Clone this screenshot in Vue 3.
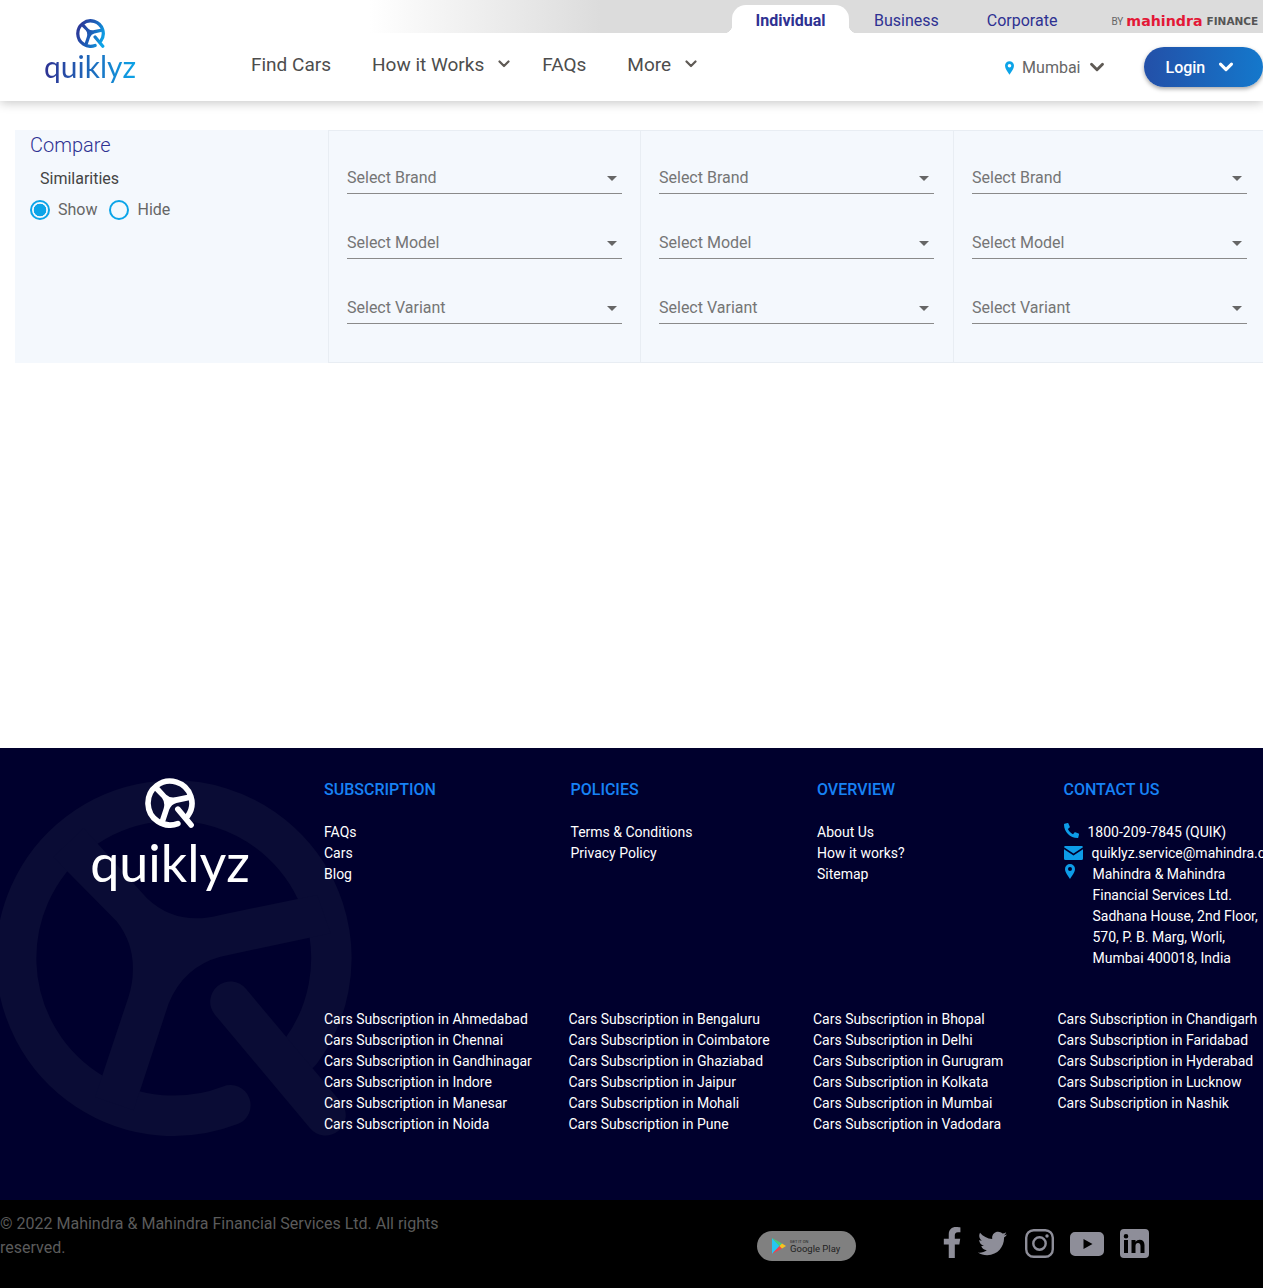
<script setup>
const similar = ["Show", "Hide"];
const selectCols = [1, 2, 3];
const selects = ["Select Brand", "Select Model", "Select Variant"];

const footerCols = [
  { title: "SUBSCRIPTION", links: ["FAQs", "Cars", "Blog"] },
  { title: "POLICIES", links: ["Terms & Conditions", "Privacy Policy"] },
  { title: "OVERVIEW", links: ["About Us", "How it works?", "Sitemap"] },
];

const cities = [
  ["Ahmedabad", "Chennai", "Gandhinagar", "Indore", "Manesar", "Noida"],
  ["Bengaluru", "Coimbatore", "Ghaziabad", "Jaipur", "Mohali", "Pune"],
  ["Bhopal", "Delhi", "Gurugram", "Kolkata", "Mumbai", "Vadodara"],
  ["Chandigarh", "Faridabad", "Hyderabad", "Lucknow", "Nashik"],
];
</script>

<template>
  <div class="page">
    <!-- shared wheel shape for both logos and the footer watermark -->
    <svg class="defs" width="0" height="0">
      <defs>
        <linearGradient id="wheelGrad" gradientUnits="userSpaceOnUse" x1="0" y1="300" x2="1060" y2="700">
          <stop offset="0" stop-color="#2e3192" />
          <stop offset="0.55" stop-color="#1c5fb8" />
          <stop offset="1" stop-color="#0ca4e8" />
        </linearGradient>
        <symbol id="wheel" viewBox="-15 85 1180 1075">
          <path fill="none" stroke-width="121" stroke-linecap="round" d="M690 1065A472 472 0 1 1 900 905" />
          <path stroke="none" d="M160 322L350 515Q400 580 398 660Q398 700 385 740L285 1040L400 1080L505 760Q550 650 660 620L990 550L950 435L660 495Q530 530 440 445L250 235Z" />
          <path fill="none" stroke-width="121" stroke-linecap="round" d="M690 755L975 1095" />
        </symbol>
      </defs>
    </svg>

    <header class="header">
      <div class="strip">
        <div class="tabs">
          <a class="tab active">Individual</a>
          <a class="tab business">Business</a>
          <a class="tab corporate">Corporate</a>
        </div>
        <div class="by-line">
          <span class="by">BY</span>
          <span class="mahindra">mahindra</span>
          <span class="finance">FINANCE</span>
        </div>
      </div>

      <div class="bar">
        <div class="logo">
          <svg class="logo-icon" fill="url(#wheelGrad)" stroke="url(#wheelGrad)"><use href="#wheel" /></svg>
          <span class="logo-word">quiklyz</span>
        </div>

        <nav class="nav">
          <a class="find">Find Cars</a>
          <a class="how">How it Works</a>
          <svg class="chev how-chev" viewBox="0 0 12 8"><path d="M1.5 1.5L6 6l4.5-4.5" /></svg>
          <a class="faq">FAQs</a>
          <a class="more">More</a>
          <svg class="chev more-chev" viewBox="0 0 12 8"><path d="M1.5 1.5L6 6l4.5-4.5" /></svg>
        </nav>

        <div class="city">
          <svg class="pin" viewBox="0 0 10 15"><path fill-rule="evenodd" d="M5 0a5 5 0 0 1 5 5c0 3-3 7-5 10C3 12 0 8 0 5a5 5 0 0 1 5-5zm0 3a2 2 0 1 0 0 4 2 2 0 0 0 0-4z" /></svg>
          <span>Mumbai</span>
          <svg class="chev city-chev" viewBox="0 0 14 10"><path d="M2 2l5 5 5-5" /></svg>
        </div>

        <button class="login">
          <span>Login</span>
          <svg class="login-chev" viewBox="0 0 14 10"><path d="M2 2l5 5 5-5" /></svg>
        </button>
      </div>
    </header>

    <main class="compare">
      <section class="col-first">
        <h2>Compare</h2>
        <div class="similar">Similarities</div>
        <div class="radios">
          <label v-for="(opt, i) in similar" :key="opt" class="radio">
            <span class="ring" :class="{ on: i === 0 }"></span>
            {{ opt }}
          </label>
        </div>
      </section>
      <section v-for="c in selectCols" :key="c" class="col-select">
        <div v-for="s in selects" :key="s" class="select">
          <span>{{ s }}</span>
          <i class="caret"></i>
        </div>
      </section>
    </main>

    <footer class="footer">
      <svg class="watermark"><use href="#wheel" /></svg>
      <div class="foot-main">
        <div class="foot-logo">
          <svg class="foot-icon" fill="#fff" stroke="#fff"><use href="#wheel" /></svg>
          <span class="foot-word">quiklyz</span>
        </div>
        <div class="foot-cols">
          <div class="foot-row">
            <div v-for="col in footerCols" :key="col.title">
              <h4>{{ col.title }}</h4>
              <a v-for="l in col.links" :key="l" class="foot-link">{{ l }}</a>
            </div>
            <div class="contact">
              <h4>CONTACT US</h4>
              <div class="contact-line">
                <svg class="c-phone" viewBox="0 0 512 512"><path transform="matrix(-1 0 0 1 512 0)" d="M493.4 24.6l-104-24c-11.3-2.6-22.9 3.3-27.5 13.9l-48 112c-4.2 9.8-1.4 21.3 6.9 28l60.6 49.6c-36 76.7-98.9 140.5-177.2 177.2l-49.6-60.6c-6.8-8.3-18.2-11.1-28-6.9l-112 48C3.9 366.5-2 378.1.6 389.4l24 104C27.1 504.2 36.7 512 48 512c256.1 0 464-207.5 464-464 0-11.2-7.7-20.9-18.6-23.4z" /></svg>
                <span>1800-209-7845 (QUIK)</span>
              </div>
              <div class="contact-line">
                <svg class="c-mail" viewBox="0 0 19 14"><path d="M1.5 0h16A1.5 1.5 0 0 1 19 1.2L9.5 7.4 0 1.2A1.5 1.5 0 0 1 1.5 0zM0 3.2l9.5 6.2L19 3.2v9.3a1.5 1.5 0 0 1-1.5 1.5h-16A1.5 1.5 0 0 1 0 12.5z" /></svg>
                <span class="nowrap">quiklyz.service@mahindra.com</span>
              </div>
              <div class="contact-line">
                <svg class="c-pin" viewBox="0 0 10 15"><path fill-rule="evenodd" d="M5 0a5 5 0 0 1 5 5c0 3-3 7-5 10C3 12 0 8 0 5a5 5 0 0 1 5-5zm0 3a2 2 0 1 0 0 4 2 2 0 0 0 0-4z" /></svg>
                <span class="address">Mahindra &amp; Mahindra<br />Financial Services Ltd.<br />Sadhana House, 2nd Floor,<br />570, P. B. Marg, Worli,<br />Mumbai 400018, India</span>
              </div>
            </div>
          </div>
          <div class="city-row">
            <div v-for="(col, i) in cities" :key="i">
              <a v-for="name in col" :key="name" class="foot-link">Cars Subscription in {{ name }}</a>
            </div>
          </div>
        </div>
      </div>
    </footer>

    <div class="bottom">
      <p class="copy">© 2022 Mahindra &amp; Mahindra Financial Services Ltd. All rights reserved.</p>
      <div class="play">
        <svg class="play-icon" viewBox="0 0 14 16">
          <path fill="#25c6f0" d="M0 0l7.500 8L0 16z" />
          <path fill="#3fd07c" d="M0 0l10 5.500L7.500 8z" />
          <path fill="#f0414f" d="M0 16l10-5.500L7.500 8z" />
          <path fill="#f9c21e" d="M10 5.500L14 8l-4 2.500L7.500 8z" />
        </svg>
        <div class="play-text">
          <span class="get">GET IT ON</span>
          <span class="gp">Google Play</span>
        </div>
      </div>
      <div class="social">
        <svg class="s-f" viewBox="22 0 272 512"><path d="M279.14 288l14.22-92.66h-88.91v-60.13c0-25.35 12.42-50.06 52.24-50.06h40.42V6.26S260.43 0 225.36 0c-73.22 0-121.08 44.38-121.08 124.72v70.62H22.89V288h81.39v224h100.17V288z" /></svg>
        <svg class="s-t" viewBox="0 0 512 512"><path d="M459.37 151.716c.325 4.548.325 9.097.325 13.645 0 138.72-105.583 298.558-298.558 298.558-59.452 0-114.68-17.219-161.137-47.106 8.447.974 16.568 1.299 25.34 1.299 49.055 0 94.213-16.568 130.274-44.832-46.132-.975-84.792-31.188-98.112-72.772 6.498.974 12.995 1.624 19.818 1.624 9.421 0 18.843-1.3 27.614-3.573-48.081-9.747-84.143-51.98-84.143-102.985v-1.299c13.969 7.797 30.214 12.67 47.431 13.319-28.264-18.843-46.781-51.005-46.781-87.391 0-19.492 5.197-37.36 14.294-52.954 51.655 63.675 129.3 105.258 216.365 109.807-1.624-7.797-2.599-15.918-2.599-24.04 0-57.828 46.782-104.934 104.934-104.934 30.213 0 57.502 12.67 76.67 33.137 23.715-4.548 46.456-13.32 66.599-25.34-7.798 24.366-24.366 44.833-46.132 57.827 21.117-2.273 41.584-8.122 60.426-16.243-14.292 20.791-32.161 39.308-52.628 54.253z" /></svg>
        <svg class="s-i" viewBox="0 0 29 29">
          <rect x="1.2" y="1.2" width="26.6" height="26.6" rx="7.5" fill="none" stroke="#8e8e99" stroke-width="2.4" />
          <circle cx="14.5" cy="14.5" r="6.2" fill="none" stroke="#8e8e99" stroke-width="2.4" />
          <circle cx="22" cy="7" r="1.7" />
        </svg>
        <svg class="s-y" viewBox="0 0 34 24"><path fill-rule="evenodd" d="M5 0h24a5 5 0 0 1 5 5v14a5 5 0 0 1-5 5H5a5 5 0 0 1-5-5V5a5 5 0 0 1 5-5zm8.500 7v10l9-5z" /></svg>
        <svg class="s-l" viewBox="0 0 29 29"><path fill-rule="evenodd" d="M4 0h21a4 4 0 0 1 4 4v21a4 4 0 0 1-4 4H4a4 4 0 0 1-4-4V4a4 4 0 0 1 4-4zM4 11v13h4V11zm2-6a2.300 2.300 0 1 0 0 4.600A2.300 2.300 0 0 0 6 5zm5.500 6v13h4v-7c0-2 1-3 2.500-3s2.500 1 2.500 3v7h4v-8c0-3.500-2-5.300-4.800-5.300-1.800 0-3.200.8-4.200 2.100V11z" /></svg>
      </div>
    </div>
  </div>
</template>

<style>
html, body {
  margin: 0;
  overflow-x: hidden;
  background: #fff;
}
</style>

<style scoped>
.page {
  width: 1263px;
  overflow: hidden;
  font-family: Roboto, "Liberation Sans", sans-serif;
}
.defs { position: absolute; }

/* header */
.header {
  height: 101px;
  background: #fff;
  box-shadow: 0 2px 10px rgba(0, 0, 0, 0.22);
  position: relative;
}
.strip {
  height: 33px;
  margin-left: 370px;
  background: linear-gradient(90deg, #fff 0, #dcdcdc 230px);
  display: flex;
  align-items: flex-end;
}
.tabs {
  display: flex;
  margin-left: 362px;
  height: 28px;
}
.tab {
  font-size: 16px;
  line-height: 31px;
  color: #2e3192;
}
.tab.active {
  width: 117px;
  text-align: center;
  background: #fff;
  border-radius: 14px 14px 0 0;
  font-weight: 700;
  position: relative;
}
/* little flares where the active tab meets the bar */
.tab.active::before,
.tab.active::after {
  content: "";
  position: absolute;
  bottom: 0;
  width: 8px;
  height: 8px;
}
.tab.active::before {
  left: -8px;
  background: radial-gradient(circle at 0 0, transparent 8px, #fff 8.5px);
}
.tab.active::after {
  right: -8px;
  background: radial-gradient(circle at 100% 0, transparent 8px, #fff 8.5px);
}
.tab.business { margin-left: 25px; }
.tab.corporate { margin-left: 48px; }
.by-line {
  margin-left: 54px;
  height: 28px;
  display: flex;
  align-items: center;
  gap: 3px;
  white-space: nowrap;
  padding-top: 4px;
  box-sizing: border-box;
}
.by { font-size: 10px; color: #666; }
.mahindra {
  font-family: "DejaVu Sans", sans-serif;
  font-size: 14.2px;
  font-weight: 700;
  line-height: 14px;
  color: #e31837;
}
.finance {
  font-family: "DejaVu Sans", sans-serif;
  font-size: 10.5px;
  font-weight: 700;
  color: #555;
  margin-left: 1px;
}
.bar {
  height: 68px;
  display: flex;
  align-items: flex-start;
}
.logo {
  width: 251px;
  margin-top: -14px;
  padding-left: 44px;
  box-sizing: border-box;
  display: flex;
  flex-direction: column;
  flex: none;
}
.logo-icon {
  width: 32px;
  height: 29px;
  margin-left: 32px;
}
.logo-word {
  font-family: Lato, sans-serif;
  font-size: 30px;
  font-weight: 400;
  line-height: 36px;
  width: 92px;
  background: linear-gradient(90deg, #2e3192, #1c6fc0 55%, #0ca4e8);
  -webkit-background-clip: text;
  background-clip: text;
  color: transparent;
}
.nav {
  display: flex;
  align-items: center;
  height: 24px;
  margin-top: 19px;
  font-size: 19px;
  color: #4d4d4d;
  white-space: nowrap;
  flex: none;
}
.how { margin-left: 41px; }
.faq { margin-left: 32px; }
.more { margin-left: 41px; }
.chev {
  fill: none;
  stroke: #5f5a55;
  stroke-width: 2.2;
  stroke-linecap: round;
  stroke-linejoin: round;
}
.how-chev, .more-chev {
  width: 12px;
  height: 8px;
}
.how-chev { margin-left: 14px; }
.more-chev { margin-left: 14px; }
.city {
  margin-left: 308px;
  margin-top: 25px;
  display: flex;
  align-items: center;
  font-size: 16px;
  color: #666;
  flex: none;
}
.pin {
  width: 9px;
  height: 14px;
  fill: #0ca4e8;
  margin-right: 8px;
}
.city-chev {
  width: 16px;
  height: 11px;
  margin-left: 8px;
  stroke-width: 2.6;
}
.login {
  margin-left: 39px;
  margin-top: 14px;
  width: 119px;
  height: 40px;
  border: none;
  border-radius: 20px;
  background: linear-gradient(90deg, #2350a8, #1478cc);
  box-shadow: 0 2px 4px rgba(0, 0, 0, 0.35);
  color: #fff;
  font-family: inherit;
  font-size: 16px;
  font-weight: 500;
  display: flex;
  align-items: center;
  padding: 0 0 0 22px;
  flex: none;
}
.login-chev {
  width: 16px;
  height: 11px;
  margin-left: 13px;
  fill: none;
  stroke: #fff;
  stroke-width: 2.8;
  stroke-linecap: round;
  stroke-linejoin: round;
}

/* compare panel */
.compare {
  margin: 29px 0 385px 15px;
  height: 233px;
  display: grid;
  grid-template-columns: 313px 312px 313px 1fr;
  background: #f4f8fd;
}
.col-first { padding-left: 15px; }
.col-first h2 {
  margin: 3px 0 0;
  font-size: 20px;
  font-weight: 300;
  line-height: 24px;
  color: #2e3192;
}
.similar {
  margin: 12px 0 0 10px;
  font-size: 16px;
  line-height: 20px;
  color: #444;
}
.radios {
  display: flex;
  gap: 12px;
  margin-top: 11px;
}
.radio {
  display: flex;
  align-items: center;
  gap: 8px;
  font-size: 16px;
  line-height: 20px;
  color: #666;
}
.ring {
  width: 20px;
  height: 20px;
  box-sizing: border-box;
  border: 2px solid #0ca4e8;
  border-radius: 50%;
}
.ring.on { background: radial-gradient(circle, #0ca4e8 6px, transparent 6.6px); }
.col-select {
  border: 1px solid #e8edf3;
  border-right: none;
  padding: 30px 0 0 18px;
}
.select {
  width: 275px;
  height: 32px;
  margin-bottom: 32px;
  border-bottom: 1px solid #8a8a8a;
  display: flex;
  align-items: flex-start;
  justify-content: space-between;
  font-size: 16px;
  line-height: 34px;
  color: #757575;
}
.caret {
  width: 0;
  height: 0;
  margin: 15px 5px 0 0;
  border-left: 5px solid transparent;
  border-right: 5px solid transparent;
  border-top: 5px solid #666;
}

/* footer */
.footer {
  height: 452px;
  background: #00002d;
  position: relative;
  overflow: hidden;
  color: #fff;
}
.watermark {
  position: absolute;
  left: -5px;
  top: 30px;
  width: 394px;
  height: 359px;
  fill: #0a0c35;
  stroke: #0a0c35;
}
.foot-main {
  position: relative;
  display: grid;
  grid-template-columns: 324px 1fr;
  padding-top: 31px;
}
.foot-logo {
  display: flex;
  flex-direction: column;
  align-items: center;
  padding-left: 16px;
  margin-top: -1px;
}
.foot-icon {
  width: 55px;
  height: 50px;
  margin-left: 5px;
}
.foot-word {
  font-family: Lato, sans-serif;
  font-size: 52px;
  font-weight: 400;
  line-height: 60px;
  margin-top: 4px;
}
.foot-row {
  display: grid;
  grid-template-columns: repeat(4, 246.5px);
  height: 190px;
}
.footer h4 {
  margin: 0 0 22px;
  font-size: 16px;
  font-weight: 500;
  line-height: 21px;
  color: #1782f5;
}
.foot-link {
  display: block;
  font-size: 14px;
  line-height: 21px;
  white-space: nowrap;
}
.contact-line {
  display: flex;
  align-items: flex-start;
  font-size: 14px;
  line-height: 21px;
}
.contact-line svg { fill: #0d9ce8; flex: none; }
.c-phone {
  width: 15px;
  height: 15px;
  margin: 1px 9px 0 0;
}
.c-mail {
  width: 19px;
  height: 14px;
  margin: 3px 9px 0 0;
}
.c-pin {
  width: 10px;
  height: 15px;
  margin: 0 18px 0 1px;
}
.nowrap { white-space: nowrap; }
.address { white-space: nowrap; }
.city-row {
  display: grid;
  grid-template-columns: repeat(4, 244.5px);
  margin-top: 40px;
}

/* bottom bar */
.bottom {
  height: 88px;
  background: #000;
  display: flex;
  align-items: flex-start;
}
.copy {
  width: 470px;
  margin: 12px 0 0;
  font-size: 16px;
  line-height: 24px;
  color: #5b5b5b;
}
.play {
  margin: 31px 0 0 287px;
  width: 99px;
  height: 30px;
  border-radius: 15px;
  background: #808080;
  display: flex;
  align-items: center;
  padding-left: 15px;
  box-sizing: border-box;
  gap: 4px;
  flex: none;
}
.play-icon { width: 14px; height: 16px; flex: none; }
.play-text {
  display: flex;
  flex-direction: column;
  color: #222;
  white-space: nowrap;
}
.get { font-size: 4px; line-height: 5px; }
.gp { font-size: 9.5px; line-height: 10px; }
.social {
  display: flex;
  align-items: flex-start;
  margin-left: 87px;
  fill: #8e8e99;
  flex: none;
}
.s-f { width: 18px; height: 31px; margin-top: 27px; }
.s-t { width: 29px; height: 29px; margin: 29px 0 0 17px; }
.s-i { width: 29px; height: 29px; margin: 29px 0 0 18px; }
.s-y { width: 34px; height: 24px; margin: 32px 0 0 16px; }
.s-l { width: 29px; height: 29px; margin: 29px 0 0 16px; }
</style>
